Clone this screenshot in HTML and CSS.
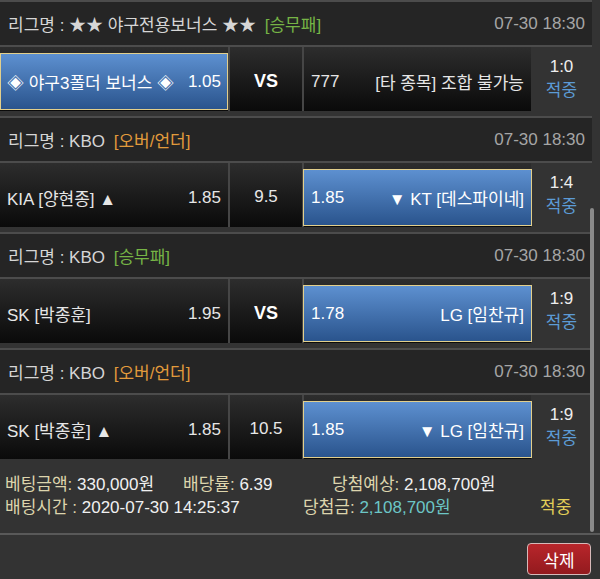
FILE: index.html
```html
<!DOCTYPE html>
<html lang="ko">
<head>
<meta charset="utf-8">
<title>베팅내역</title>
<link rel="stylesheet" href="styles.css">
</head>
<body>
<div class="games">
  <section class="game">
    <div class="league">
      <span class="league-name">리그명 : ★★ 야구전용보너스 ★★ <span class="type green">[승무패]</span></span>
      <span class="date">07-30 18:30</span>
    </div>
    <div class="match">
      <div class="cell side left"><div class="pick selected"><span>◈ 야구3폴더 보너스 ◈</span><span>1.05</span></div></div>
      <div class="cell mid vs">VS</div>
      <div class="cell side right"><div class="pick"><span>777</span><span>[타 종목] 조합 불가능</span></div></div>
      <div class="result"><span class="score">1:0</span><span class="hit">적중</span></div>
    </div>
  </section>
  <section class="game">
    <div class="league">
      <span class="league-name">리그명 : KBO <span class="type orange">[오버/언더]</span></span>
      <span class="date">07-30 18:30</span>
    </div>
    <div class="match">
      <div class="cell side left"><div class="pick"><span>KIA [양현종] ▲</span><span>1.85</span></div></div>
      <div class="cell mid">9.5</div>
      <div class="cell side right"><div class="pick selected"><span>1.85</span><span>▼ KT [데스파이네]</span></div></div>
      <div class="result"><span class="score">1:4</span><span class="hit">적중</span></div>
    </div>
  </section>
  <section class="game">
    <div class="league">
      <span class="league-name">리그명 : KBO <span class="type green">[승무패]</span></span>
      <span class="date">07-30 18:30</span>
    </div>
    <div class="match">
      <div class="cell side left"><div class="pick"><span>SK [박종훈]</span><span>1.95</span></div></div>
      <div class="cell mid vs">VS</div>
      <div class="cell side right"><div class="pick selected"><span>1.78</span><span>LG [임찬규]</span></div></div>
      <div class="result"><span class="score">1:9</span><span class="hit">적중</span></div>
    </div>
  </section>
  <section class="game">
    <div class="league">
      <span class="league-name">리그명 : KBO <span class="type orange">[오버/언더]</span></span>
      <span class="date">07-30 18:30</span>
    </div>
    <div class="match">
      <div class="cell side left"><div class="pick"><span>SK [박종훈] ▲</span><span>1.85</span></div></div>
      <div class="cell mid">10.5</div>
      <div class="cell side right"><div class="pick selected"><span>1.85</span><span>▼ LG [임찬규]</span></div></div>
      <div class="result"><span class="score">1:9</span><span class="hit">적중</span></div>
    </div>
  </section>
</div>
<div class="summary">
  <div class="sum-row">
    <span class="s-a"><span class="lbl">베팅금액:</span> 330,000원</span>
    <span class="s-b"><span class="lbl">배당률:</span> 6.39</span>
    <span><span class="lbl">당첨예상:</span> 2,108,700원</span>
  </div>
  <div class="sum-row">
    <span class="s-a2"><span class="lbl">배팅시간 :</span> 2020-07-30 14:25:37</span>
    <span class="s-b2"><span class="lbl">당첨금:</span> <span class="win">2,108,700원</span></span>
    <span class="status">적중</span>
  </div>
</div>
<div class="actions">
  <button class="delete">삭제</button>
</div>
<div class="scroll-indicator"></div>
</body>
</html>
```

FILE: styles.css
```css
html, body {
  margin: 0;
  padding: 0;
}
body {
  width: 600px;
  height: 579px;
  overflow: hidden;
  position: relative;
  background: #333333;
  font-family: "Liberation Sans", "Noto Sans CJK KR", sans-serif;
  font-size: 17px;
  color: #e8e8e8;
}
.games {
  width: 592px;
}
.game {
  padding-bottom: 5px;
}
.league {
  display: flex;
  justify-content: space-between;
  align-items: center;
  height: 43px;
  padding: 0 7px 0 8px;
  background: #252525;
  border-top: 2px solid #4c4c4c;
  border-bottom: 2px solid #4c4c4c;
  color: #d6d6d6;
  white-space: nowrap;
}
.type {
  margin-left: 4px;
}
.green { color: #76b446; }
.orange { color: #e29b3c; }
.date { color: #a6a6a6; }

.match {
  display: flex;
  height: 64px;
}
.cell {
  background: linear-gradient(#2d2d2d, #0a0a0a);
  box-sizing: border-box;
}
.side {
  padding: 6px 0 1px;
}
.left {
  width: 230px;
  border-right: 2px solid #464646;
}
.mid {
  width: 74px;
  border-right: 2px solid #464646;
  display: flex;
  align-items: center;
  justify-content: center;
  padding-top: 4px;
  color: #e8e8e8;
}
.vs {
  font-weight: bold;
  font-size: 18px;
  color: #ffffff;
}
.right {
  width: 227px;
}
.pick {
  height: 100%;
  box-sizing: border-box;
  display: flex;
  justify-content: space-between;
  align-items: center;
  padding: 0 6px;
  border: 1px solid transparent;
  white-space: nowrap;
  color: #e6e6e6;
}
.pick.selected {
  background: linear-gradient(#5d90d0, #2a548d);
  border-color: #e2cf8c;
  color: #ffffff;
}
.right .pick.selected {
  margin-left: -1px;
  margin-right: -1px;
  padding: 0 7px;
}
.result {
  width: 61px;
  display: flex;
  flex-direction: column;
  align-items: center;
  justify-content: center;
  line-height: 24px;
}
.score { color: #eeeeee; }
.hit { color: #5c9bd6; }

.summary {
  width: 600px;
  height: 71px;
  box-sizing: border-box;
  padding: 9px 0 0 5px;
  border-bottom: 2px solid #595959;
  line-height: 23px;
  color: #f0f0f0;
  white-space: nowrap;
}
.sum-row {
  display: flex;
}
.s-a { width: 178px; }
.s-b { width: 149px; }
.s-a2 { width: 298px; }
.s-b2 { width: 237px; }
.lbl { color: #ddd5ad; }
.win { color: #6cc6c6; }
.status { color: #e2cf58; }

.actions {
  display: flex;
  justify-content: flex-end;
  padding: 8px 9px 0 0;
}
.delete {
  width: 64px;
  height: 32px;
  box-sizing: border-box;
  border: 1px solid #d7b9b9;
  border-radius: 4px;
  background: linear-gradient(#b8262b, #931a1e);
  color: #ffffff;
  font-family: "Liberation Sans", "Noto Sans CJK KR", sans-serif;
  font-size: 17px;
  padding: 0;
}
.scroll-indicator {
  position: absolute;
  left: 590px;
  top: 208px;
  width: 4px;
  height: 324px;
  border-radius: 2px;
  background: #8a8a8a;
}
```
